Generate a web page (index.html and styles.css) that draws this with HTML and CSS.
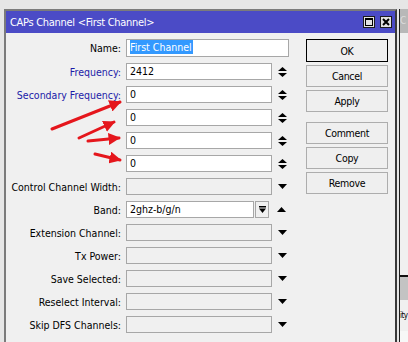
FILE: index.html
```html
<!DOCTYPE html>
<html lang="en">
<head>
  <meta charset="UTF-8" />
  <title>CAPs Channel</title>
  <link rel="stylesheet" href="styles.css">
</head>
<body>
  <div class="desk">
    <div class="dialog">
      <div class="titlebar">
        <span class="title">CAPs Channel &lt;First Channel&gt;</span>
        <div class="title-btns">
          <span class="tbtn">
            <svg width="8" height="8" viewBox="0 0 8 8"><rect x="0.5" y="0.5" width="7" height="7" fill="none" stroke="#000"/><rect x="0" y="0" width="8" height="2" fill="#000"/></svg>
          </span>
          <span class="tbtn">
            <svg width="8" height="8" viewBox="0 0 8 8"><path d="M1 1 L7 7 M7 1 L1 7" stroke="#000" stroke-width="2"/></svg>
          </span>
        </div>
      </div>

      <div class="content">
        <div class="form">
          <div class="row first">
            <label>Name:</label>
            <div class="field wide"><span class="sel">First Channel</span></div>
          </div>
          <div class="row">
            <label class="blue">Frequency:</label>
            <div class="field">2412</div>
            <span class="ctl"><svg width="9" height="10" viewBox="0 0 9 10"><path d="M0 4 L4.5 0 L9 4 Z M0 6 L9 6 L4.5 10 Z" fill="#000"/></svg></span>
          </div>
          <div class="row">
            <label class="blue">Secondary Frequency:</label>
            <div class="field">0</div>
            <span class="ctl"><svg width="9" height="10" viewBox="0 0 9 10"><path d="M0 4 L4.5 0 L9 4 Z M0 6 L9 6 L4.5 10 Z" fill="#000"/></svg></span>
          </div>
          <div class="row">
            <label></label>
            <div class="field">0</div>
            <span class="ctl"><svg width="9" height="10" viewBox="0 0 9 10"><path d="M0 4 L4.5 0 L9 4 Z M0 6 L9 6 L4.5 10 Z" fill="#000"/></svg></span>
          </div>
          <div class="row">
            <label></label>
            <div class="field">0</div>
            <span class="ctl"><svg width="9" height="10" viewBox="0 0 9 10"><path d="M0 4 L4.5 0 L9 4 Z M0 6 L9 6 L4.5 10 Z" fill="#000"/></svg></span>
          </div>
          <div class="row">
            <label></label>
            <div class="field">0</div>
            <span class="ctl"><svg width="9" height="10" viewBox="0 0 9 10"><path d="M0 4 L4.5 0 L9 4 Z M0 6 L9 6 L4.5 10 Z" fill="#000"/></svg></span>
          </div>
          <div class="row">
            <label>Control Channel Width:</label>
            <div class="field off"></div>
            <span class="ctl"><svg width="9" height="5" viewBox="0 0 9 5"><path d="M0 0 L9 0 L4.5 5 Z" fill="#000"/></svg></span>
          </div>
          <div class="row">
            <label>Band:</label>
            <div class="field band">2ghz-b/g/n</div>
            <span class="dd"><svg width="7" height="7" viewBox="0 0 7 7"><rect x="0" y="0" width="7" height="1.5" fill="#000"/><path d="M0 2.5 L7 2.5 L3.5 7 Z" fill="#000"/></svg></span>
            <span class="ctl up"><svg width="9" height="5" viewBox="0 0 9 5"><path d="M0 5 L4.5 0 L9 5 Z" fill="#000"/></svg></span>
          </div>
          <div class="row">
            <label>Extension Channel:</label>
            <div class="field off"></div>
            <span class="ctl"><svg width="9" height="5" viewBox="0 0 9 5"><path d="M0 0 L9 0 L4.5 5 Z" fill="#000"/></svg></span>
          </div>
          <div class="row">
            <label>Tx Power:</label>
            <div class="field off"></div>
            <span class="ctl"><svg width="9" height="5" viewBox="0 0 9 5"><path d="M0 0 L9 0 L4.5 5 Z" fill="#000"/></svg></span>
          </div>
          <div class="row">
            <label>Save Selected:</label>
            <div class="field off"></div>
            <span class="ctl"><svg width="9" height="5" viewBox="0 0 9 5"><path d="M0 0 L9 0 L4.5 5 Z" fill="#000"/></svg></span>
          </div>
          <div class="row">
            <label>Reselect Interval:</label>
            <div class="field off"></div>
            <span class="ctl"><svg width="9" height="5" viewBox="0 0 9 5"><path d="M0 0 L9 0 L4.5 5 Z" fill="#000"/></svg></span>
          </div>
          <div class="row">
            <label>Skip DFS Channels:</label>
            <div class="field off"></div>
            <span class="ctl"><svg width="9" height="5" viewBox="0 0 9 5"><path d="M0 0 L9 0 L4.5 5 Z" fill="#000"/></svg></span>
          </div>
        </div>

        <div class="buttons">
          <button class="btn default">OK</button>
          <button class="btn">Cancel</button>
          <button class="btn">Apply</button>
          <button class="btn spaced">Comment</button>
          <button class="btn">Copy</button>
          <button class="btn">Remove</button>
        </div>
      </div>
    </div>

    <div class="behind">
      <div class="b-title">C</div>
      <div class="b-body"></div>
      <div class="b-band"></div>
      <div class="b-row">ity</div>
      <div class="b-rest"></div>
    </div>

    <!-- red annotation arrows -->
    <svg class="arrows" width="408" height="342" viewBox="0 0 408 342">
      <defs>
        <marker id="head" markerWidth="4" markerHeight="4" refX="3.5" refY="2" orient="auto">
          <path d="M0 0 L4 2 L0 4 Z" fill="#e5161c"/>
        </marker>
      </defs>
      <g stroke="#e5161c" stroke-width="3" stroke-linecap="round" marker-end="url(#head)">
        <line x1="52" y1="129" x2="120" y2="102"/>
        <line x1="79" y1="138" x2="114" y2="122"/>
        <line x1="88" y1="141" x2="119" y2="138"/>
        <line x1="95" y1="154" x2="120" y2="160"/>
      </g>
    </svg>
  </div>
</body>
</html>
```

FILE: styles.css
```css
* {
  margin: 0;
  padding: 0;
  box-sizing: border-box;
}

body {
  background: #e6e6e6;
  font-family: "DejaVu Sans Condensed", "DejaVu Sans", sans-serif;
  font-size: 10.5px;
  color: #000;
}

.desk {
  position: relative;
  width: 408px;
  height: 342px;
  overflow: hidden;
  display: flex;
  padding: 9px 0 0 4px;
  background: #e6e6e6;
}

.dialog {
  width: 393px;
  flex: none;
  border: 2px solid #7b7b7b;
  border-right-color: #3a3a3a;
  border-bottom: none;
  background: #f0f0f0;
  display: flex;
  flex-direction: column;
}

.titlebar {
  height: 22px;
  flex: none;
  background: #4b4bc6;
  color: #fff;
  display: flex;
  align-items: center;
  justify-content: space-between;
  padding: 0 3px 0 4px;
}

.title {
  font-size: 11px;
  letter-spacing: -0.3px;
}

.title-btns {
  display: flex;
  gap: 5px;
}

.tbtn {
  width: 12px;
  height: 12px;
  background: #e2e2e2;
  border: 1px solid #1c1c1c;
  display: flex;
  align-items: center;
  justify-content: center;
}

.content {
  display: flex;
  flex: 1;
}

/* Form */
.form {
  width: 294px;
  flex: none;
  padding-top: 6px;
}

.row {
  display: flex;
  align-items: center;
  height: 17px;
  margin-bottom: 6px;
}

.row.first {
  height: 18px;
}

.row label {
  width: 116px;
  flex: none;
  text-align: right;
  padding-right: 1px;
  white-space: nowrap;
}

.row label.blue {
  color: #1b1ba8;
}

.field {
  width: 146px;
  height: 100%;
  flex: none;
  margin-left: 4px;
  padding-left: 3px;
  border: 1px solid #a7a7a7;
  background: #fff;
  line-height: 15px;
  white-space: nowrap;
}

.field.wide {
  width: 163px;
}

.field.off {
  background: #f0f0f0;
}

.field.band {
  width: 128px;
}

.sel {
  background: #3399ff;
  color: #fff;
  padding: 1px 1px 1px 0;
}

.dd {
  width: 14px;
  height: 100%;
  margin-left: 1px;
  border: 1px solid #a7a7a7;
  background: #f0f0f0;
  display: flex;
  align-items: center;
  justify-content: center;
}

.ctl {
  width: 9px;
  margin-left: 6px;
  display: flex;
  align-items: center;
}

.ctl.up {
  margin-left: 8px;
}

/* Buttons */
.buttons {
  width: 82px;
  margin-left: 6px;
  padding-top: 6px;
  display: flex;
  flex-direction: column;
  gap: 3px;
}

.btn {
  height: 22px;
  background: #efefef;
  border: 1px solid #adadad;
  font-family: inherit;
  font-size: 10.5px;
  letter-spacing: -0.3px;
  color: #000;
}

.btn.default {
  height: 23px;
  border-color: #000;
}

.btn.spaced {
  margin-top: 7px;
}

/* Window behind */
.behind {
  flex: 1;
  margin-left: 2px;
  border-left: 1px solid #1e1e1e;
  display: flex;
  flex-direction: column;
  overflow: hidden;
}

.b-title {
  height: 24px;
  background: #b8b8b8;
  color: #dcdcdc;
  font-size: 10px;
  line-height: 24px;
}

.b-body {
  height: 242px;
  background: #f0f0f0;
}

.b-band {
  height: 25px;
  background: #c3c3c3;
  border-top: 2px solid #111;
}

.b-row {
  height: 31px;
  background: #f0f0f0;
  font-size: 8px;
  letter-spacing: -0.5px;
  line-height: 31px;
  white-space: nowrap;
}

.b-rest {
  flex: 1;
  background: #f7f7f7;
}

.arrows {
  position: absolute;
  left: 0;
  top: 0;
  pointer-events: none;
}
```
